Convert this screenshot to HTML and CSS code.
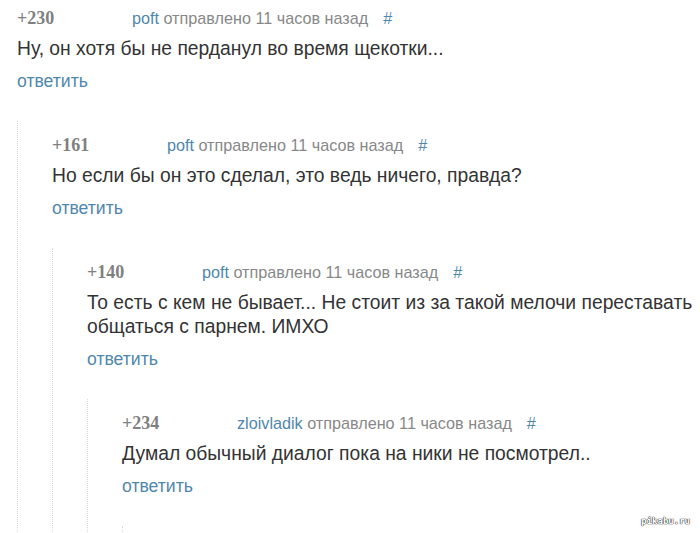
FILE: index.html
```html
<!DOCTYPE html>
<html lang="ru">
<head>
<meta charset="utf-8">
<link rel="stylesheet" href="styles.css">
</head>
<body>
<div class="thread">
  <div class="comment">
    <div class="head"><span class="score">+230</span><a class="author">poft</a> <span class="meta">отправлено 11 часов назад</span><a class="hash">#</a></div>
    <div class="body">Ну, он хотя бы не перданул во время щекотки...</div>
    <div class="reply"><a>ответить</a></div>
  </div>
  <div class="children">
    <div class="comment">
      <div class="head"><span class="score">+161</span><a class="author">poft</a> <span class="meta">отправлено 11 часов назад</span><a class="hash">#</a></div>
      <div class="body">Но если бы он это сделал, это ведь ничего, правда?</div>
      <div class="reply"><a>ответить</a></div>
    </div>
    <div class="children">
      <div class="comment">
        <div class="head"><span class="score">+140</span><a class="author">poft</a> <span class="meta">отправлено 11 часов назад</span><a class="hash">#</a></div>
        <div class="body">То есть с кем не бывает... Не стоит из за такой мелочи переставать общаться с парнем. ИМХО</div>
        <div class="reply"><a>ответить</a></div>
      </div>
      <div class="children">
        <div class="comment">
          <div class="head"><span class="score">+234</span><a class="author">zloivladik</a> <span class="meta">отправлено 11 часов назад</span><a class="hash">#</a></div>
          <div class="body">Думал обычный диалог пока на ники не посмотрел..</div>
          <div class="reply"><a>ответить</a></div>
        </div>
        <div class="children children-more"></div>
      </div>
    </div>
  </div>
</div>
<div class="watermark">pikabu.ru</div>
</body>
</html>
```
FILE: styles.css
```css
html, body {
  margin: 0;
  padding: 0;
  background: #fff;
  overflow: hidden;
}
body {
  font-family: "Liberation Sans", Arial, sans-serif;
  color: #333;
  width: 700px;
  height: 533px;
  position: relative;
}
.thread {
  padding: 2px 0 0 17px;
}
.head {
  height: 32px;
  line-height: 32px;
  white-space: nowrap;
}
.score {
  display: inline-block;
  width: 115px;
  font-family: "Liberation Serif", "Times New Roman", serif;
  font-weight: bold;
  font-size: 18px;
  color: #808080;
}
.author {
  font-size: 16.2px;
  color: #4f87ad;
}
.meta {
  font-size: 16.2px;
  color: #888;
}
.hash {
  font-size: 16.2px;
  color: #4f87ad;
  margin-left: 15px;
}
.body {
  font-size: 19.3px;
  line-height: 24px;
  padding: 3px 0 4px;
  color: #333;
}
.reply {
  height: 32px;
  line-height: 32px;
  font-size: 17.6px;
}
.reply a {
  color: #4f87ad;
}
.children {
  margin-top: 24px;
  padding: 8px 0 0 34px;
  border-left: 1px dotted #d8d8d8;
}
.children-more {
  height: 6px;
  padding: 0;
  margin-top: 24px;
}
.watermark {
  position: absolute;
  right: 10px;
  bottom: 7px;
  font-family: "DejaVu Sans Mono", monospace;
  font-size: 9px;
  font-weight: bold;
  color: #fff;
  text-shadow: 0 0 1px #333, 0 0 1px #333, 0 0 1px #333;
}
```
